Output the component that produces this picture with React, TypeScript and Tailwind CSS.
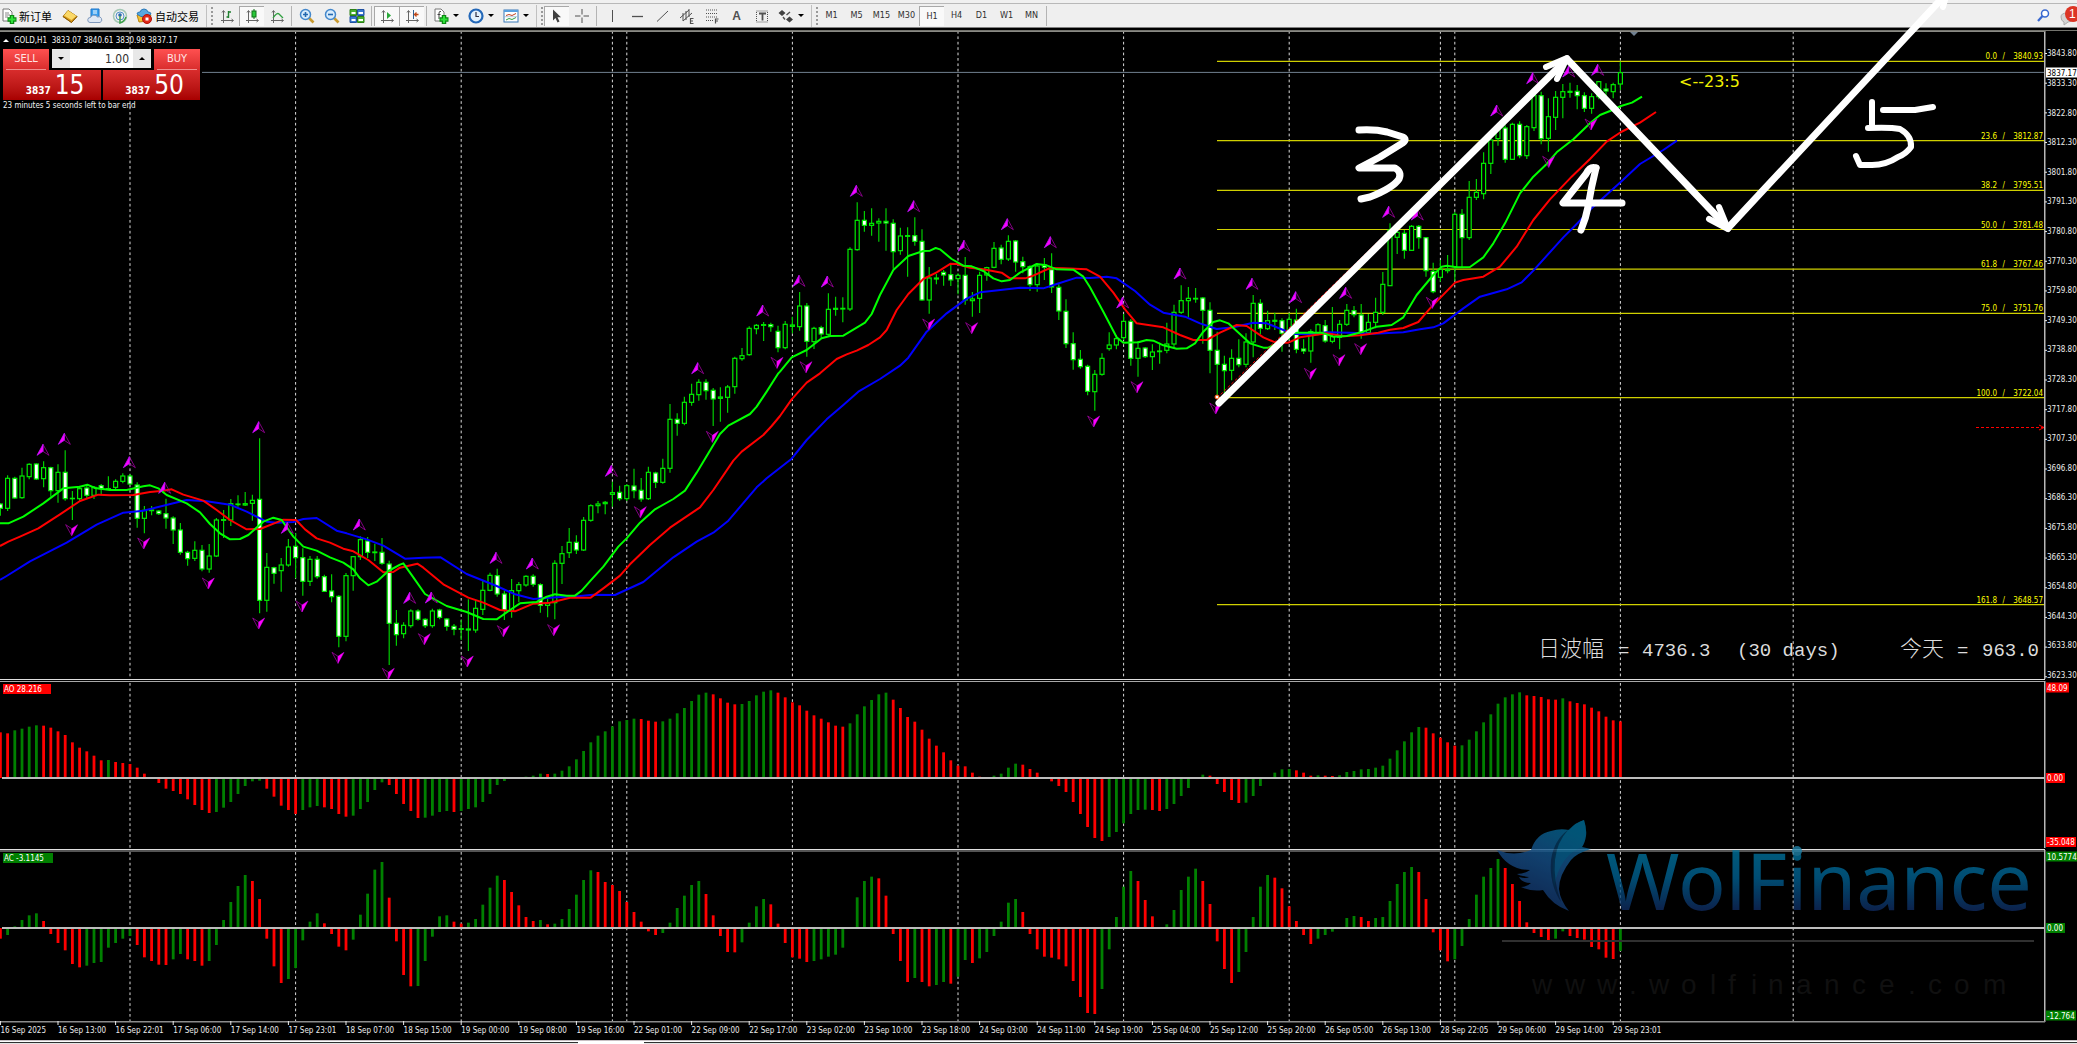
import type { ReactNode } from 'react';
import clsx from 'clsx';

type Point = [number, number];

const STEP = 7.2;
const barX = (i: number) => 0.4 + i * STEP;

const GREEN = '#00ff00';
const FONT = 'font-["DejaVu_Sans_Condensed","DejaVu_Sans",sans-serif]';

const SEPARATORS = [18, 41, 64, 85, 87, 110, 133, 156, 179, 200, 202, 225, 249];

const TIMES = [
  '16 Sep 2025', '16 Sep 13:00', '16 Sep 22:01', '17 Sep 06:00', '17 Sep 14:00', '17 Sep 23:01',
  '18 Sep 07:00', '18 Sep 15:00', '19 Sep 00:00', '19 Sep 08:00', '19 Sep 16:00', '22 Sep 01:00',
  '22 Sep 09:00', '22 Sep 17:00', '23 Sep 02:00', '23 Sep 10:00', '23 Sep 18:00', '24 Sep 03:00',
  '24 Sep 11:00', '24 Sep 19:00', '25 Sep 04:00', '25 Sep 12:00', '25 Sep 20:00', '26 Sep 05:00',
  '26 Sep 13:00', '28 Sep 22:05', '29 Sep 06:00', '29 Sep 14:00', '29 Sep 23:01',
];

const FIBS = [
  { level: '0.0', price: '3840.93', y: 61.3 },
  { level: '23.6', price: '3812.87', y: 140.7 },
  { level: '38.2', price: '3795.51', y: 190.3 },
  { level: '50.0', price: '3781.48', y: 229.5 },
  { level: '61.8', price: '3767.46', y: 269.2 },
  { level: '75.0', price: '3751.76', y: 313.4 },
  { level: '100.0', price: '3722.04', y: 397.6 },
  { level: '161.8', price: '3648.57', y: 604.6 },
];

// high, body top, body bottom, low, bearish - a third of a unit each, from the base of the segment
const CANDLES: { base: number; rows: string }[] = [
  {
    base: 400,
    rows: `310 312 325 347 1|226 235 325 333 0|230 235 294 296 1|203 228 293 296 0|190 193 230 238 0|190 192 237 240 1
|184 203 236 262 0|200 203 272 290 1|193 217 272 308 0|151 217 296 302 1|273 295 296 360 0|257 266 296 306 0
|258 264 286 297 1|258 262 286 297 0|252 257 266 284 1|229 266 267 268 0|238 244 262 268 0|220 228 244 250 0
|222 228 252 255 1|247 255 355 383 1|318 331 355 400 0|318 330 332 346 0|330 333 341 345 1|296 341 354 386 1
|349 354 390 432 1|369 390 457 464 1|452 457 476 497 1|424 451 475 483 0|435 451 507 514 1|432 468 507 518 0
|354 360 468 471 0|330 359 361 414 0|297 311 360 378 0|286 312 314 320 0|276 311 315 318 0|284 301 310 362 0
|115 298 601 640 1|459 502 601 635 0|500 503 520 551 1|474 495 512 575 0|417 441 495 500 0|400 439 473 535 1
|445 473 544 587 1|468 478 544 558 0|468 478 530 536 1|524 530 574 576 1|523 573 590 607 1|586 589 709 742 1
|519 527 709 724 0|468 470 527 572 0|409 419 470 480 0|411 423 457 474 1|431 456 458 483 0|414 457 490 494 1
|482 492 670 795 1|630 670 704 737 1|667 676 701 715 0|628 633 677 683 0|628 633 658 662 1`,
  },
  {
    base: 300,
    rows: `955 958 977 984 1|926 933 977 983 0|926 930 952 958 1|954 957 979 992 1|972 979 988 1006 1|960 986 988 1020 0
|898 987 990 1053 0|900 925 990 998 0|843 871 928 945 0|818 826 871 874 0|806 827 882 890 1|872 882 930 960 1
|837 872 932 953 0|846 854 872 907 0|826 829 855 860 0|823 829 853 860 1|850 854 916 938 1|895 909 916 952 0
|781 790 908 958 0|738 761 790 852 0|684 727 758 774 0|706 727 750 762 1|651 661 750 753 0|613 617 661 665 0
|603 612 617 640 0|603 607 611 643 0|545 578 583 620 0|557 577 596 602 1|553 557 596 603 0|506 558 572 595 1
|534 571 597 605 1|500 517 596 600 0|515 519 547 564 1|476 505 547 551 0|312 358 505 518 0|340 358 370 407 1
|290 307 370 376 0|251 283 307 317 0|238 247 284 302 0|238 247 272 299 1|264 271 297 378 1|262 291 295 365 0
|255 261 292 338 0|170 175 260 281 0|144 167 176 182 0|79 85 164 167 0|72 76 86 103 0|66 74 76 123 0
|68 74 80 95 1|77 94 143 157 1|63 73 143 148 0|50 75 79 100 0`,
  },
  {
    base: 160,
    rows: `396 438 500 512 0|429 438 544 590 1|500 505 545 567 0|497 503 522 537 1|400 448 523 527 0|410 445 448 467 0
|412 445 447 487 0|262 268 447 453 0|127 181 269 272 0|153 181 196 215 1|145 190 196 227 0|175 184 189 245 0
|145 184 189 272 1|178 190 275 326 1|203 228 272 284 0|202 227 229 350 0|172 227 244 257 1|208 244 420 422 1
|321 354 420 461 0|342 354 357 373 0|330 337 345 377 1|312 344 360 378 1|340 346 356 403 0|291 346 420 434 1
|396 417 422 470 0|335 346 415 459 0|320 323 345 362 0|246 265 322 325 0|254 264 298 313 1|226 244 297 303 0
|240 243 306 335 1|290 305 320 340 1|316 320 374 393 1|310 318 374 395 0|294 316 322 360 1|280 329 381 399 1
|373 382 453 480 1|418 454 551 564 1|517 551 599 629 1|570 598 620 626 1|614 619 694 706 1|630 643 695 752 0
|580 595 643 647 0|517 555 566 572 0|526 536 555 568 0|462 484 533 540 0|477 484 595 617 1|543 565 595 650 0
|561 564 590 594 1|553 576 590 630 0|548 573 575 611 0|488 552 571 580 0|434 457 552 564 0|376 422 457 462 0
|381 415 422 471 0|384 415 417 428 0|411 414 451 551 1|427 451 571 640 1`,
  },
  {
    base: 0,
    rows: `995 1051 1093 1190 1|1067 1093 1112 1180 1|1048 1075 1111 1141 0|1018 1075 1094 1102 1|1000 1026 1093 1102 0
|885 910 1026 1072 0|898 910 985 1002 1|932 962 986 990 0|938 961 964 990 0|955 962 1000 1055 1|940 958 1000 1020 0
|926 960 1048 1060 1|1018 1047 1053 1062 1|988 995 1053 1088 0|970 974 998 1006 0|960 977 1023 1028 1|921 1010 1024 1030 0
|960 973 1012 1048 0|912 931 973 978 0|918 932 944 952 1|912 945 998 1016 1|942 967 998 1003 0|893 937 967 985 0
|816 853 937 945 0|670 690 857 858 0|688 697 712 762 0|690 700 751 776 1|675 679 751 753 0|675 679 713 746 1
|711 713 812 830 1|788 814 875 880 1|780 808 832 845 0|765 808 812 820 0|636 643 800 842 0|627 643 713 805 1
|543 592 713 720 0|537 577 592 600 0|457 490 581 598 0|410 420 490 522 0|370 384 416 437 0|376 384 478 488 1
|368 373 478 480 0|364 373 467 475 1|375 380 467 477 0|270 287 383 393 0|275 287 416 433 1|295 350 415 455 0
|273 292 352 390 0|252 275 292 355 0|248 274 277 293 0|255 274 287 328 1|277 287 325 336 1|280 290 325 341 0
|243 245 290 298 0|250 267 273 310 1|248 254 275 295 0|185 218 252 270 0`,
  },
];

const candles = CANDLES.flatMap(({ base, rows }) =>
  rows.split('|').map(row => {
    const [high, top, bottom, low, bear] = row.trim().split(' ').map(Number);
    return { high: base + high / 3, top: base + top / 3, bottom: base + bottom / 3, low: base + low / 3, bear: bear === 1 };
  }),
);

const trace = (ox: number, oy: number, pts: string): Point[] =>
  pts.split(' ').map(p => {
    const [x, y] = p.split(',').map(Number);
    return [ox + x / 3, oy + y / 3];
  });

const LIPS = [
  ...trace(0, 400, '0,370 25,370 70,350 130,310 190,265 240,260 262,254 285,264 330,270 380,270 430,259 450,256 475,265 500,285 560,310 600,337 630,372 660,400 690,418 720,417 745,405 790,365 820,353 845,360 880,410 910,440 950,452 990,472 1030,488 1060,508 1080,535 1105,556 1130,545 1165,513 1200,494'),
  ...trace(400, 300, '10,790 40,832 75,882 140,918 200,936 250,957 290,958 330,930 360,910 410,906 440,890 465,883 500,887 525,887 545,872 575,838 610,800 655,740 680,715 720,668 765,628 820,597 855,572 890,518 935,443 960,402 985,377 1050,342 1070,320 1100,275 1135,220'),
  ...trace(780, 160, '0,635 35,592 80,570 125,535 150,528 190,527 255,488 275,462 300,405 340,330 385,288 430,273 450,272 467,264 480,268 515,297 550,317 575,319 610,333 640,355 665,364 690,360 720,338 770,312 800,316 830,328 880,329 910,350 930,382 970,455 1010,532 1030,548 1075,547 1100,540 1120,542 1150,556 1190,566 1220,565 1245,550'),
  ...trace(1200, 0, '10,995 40,966 60,961 85,970 110,993 150,1030 190,1043 205,1043 240,1025 285,998 365,998 400,1010 440,1008 490,995 530,980 575,975 610,952 650,885 700,825 725,800 740,797 770,802 810,801 850,772 880,730 915,670 960,580 1000,530 1040,492 1070,457 1120,418 1170,370 1200,345 1230,333 1263,318 1296,308 1326,290'),
];

const TEETH = [
  ...trace(0, 400, '0,438 25,425 60,410 115,385 180,343 240,303 295,284 330,286 400,285 450,276 490,272 515,268 550,284 610,302 650,330 690,360 740,388 780,387 830,367 850,359 888,360 915,388 950,415 990,428 1030,446 1060,454 1105,480 1150,517 1180,516'),
  ...trace(400, 300, '0,803 52,791 70,803 130,853 205,893 250,908 300,930 345,934 400,911 450,908 510,893 572,893 610,865 660,827 690,793 750,735 810,683 900,622 940,570 1000,482 1025,455 1090,405 1115,378'),
  ...trace(780, 160, '0,768 35,718 80,668 120,640 170,597 200,583 230,572 265,555 300,532 320,510 350,450 385,402 430,357 470,337 512,311 530,312 570,323 610,328 665,338 690,355 735,355 760,347 810,324 850,325 920,328 960,350 1000,398 1035,448 1070,490 1150,502 1200,525 1240,540'),
  ...trace(1200, 0, '0,1020 20,1020 60,998 110,975 140,978 190,1012 225,1027 265,1028 300,1012 380,1000 430,1009 480,1006 535,998 570,989 610,984 655,966 690,925 765,848 790,840 850,830 900,800 950,740 1000,660 1050,598 1115,530 1170,477 1220,425 1263,396 1320,368 1368,336'),
];

const JAW = [
  ...trace(0, 400, '0,540 20,528 90,484 200,428 290,374 370,338 430,332 520,310 560,300 620,304 690,314 740,335 800,365 830,368 880,366 910,357 950,354 1010,392 1040,400 1100,418 1150,437'),
  ...trace(400, 300, '15,776 70,773 122,772 200,822 290,858 345,883 400,897 470,892 540,888 580,884 645,885 730,846 820,772 890,725 940,698 985,662 1070,562 1100,535 1175,476'),
  ...trace(780, 160, '80,840 140,778 190,735 235,695 300,657 360,617 385,593 440,515 500,460 560,416 600,397 635,393 720,383 790,385 830,372 890,353 930,354 980,350 1010,355 1065,393 1110,434 1150,458 1215,470'),
  ...trace(1200, 0, '0,970 50,987 100,982 160,968 200,970 280,1002 340,1002 380,997 450,998 520,1001 610,997 660,988 700,982 730,970 790,925 840,890 920,868 965,847 1000,812 1090,712 1130,672 1180,620 1263,545 1320,492 1390,450 1431,422'),
];

const TOPS = [
  ...trace(0, 400, '129,133 193,100 388,170 494,247 776,65 862,367 1078,357 1229,577'),
  ...trace(400, 300, '94,876 288,757 397,774 634,496 893,188 1088,15'),
  ...trace(780, 160, '57,346 142,348 229,76 401,122 552,241 682,176 811,230 1028,411 1200,324'),
  ...trace(1200, 0, '156,835 287,875 437,862 566,619 652,627 890,315 998,218 1106,198 1193,193'),
];

const BOTTOMS = [
  ...trace(0, 400, '215,407 431,447 625,567 776,687 906,636 1014,790 1165,838'),
  ...trace(400, 300, '73,1034 202,1101 310,1010 461,1007 721,653 937,427 1131,205 1218,218'),
  ...trace(780, 160, '446,510 575,521 941,801 1071,698 1307,762'),
  ...trace(1200, 0, '331,1138 417,1097 482,1064 697,925 1046,502 1173,390'),
];

const AO = [
  137, 134, 143, 148, 154, 158, 157, 151, 140, 129, 107, 91, 80, 67, 53, 54, 48, 45, 42, 31, 13, 0, -15, -32, -39,
  -48, -64, -81, -96, -105, -102, -89, -72, -48, -24, -10, -8, -32, -56, -83, -96, -108, -96, -88, -84, -88, -93,
  -108, -116, -113, -93, -72, -36, -13, -21, -48, -78, -99, -120, -119, -113, -102, -99, -102, -99, -93, -88, -72,
  -48, -21, -9, 0, 3, 4, 7, 13, 12, 13, 22, 35, 56, 81, 107, 127, 140, 155, 170, 174, 178, 177, 172, 169, 170, 178,
  194, 210, 231, 250, 256, 251, 239, 226, 221, 222, 231, 248, 259, 263, 256, 242, 227, 218, 202, 188, 178, 167, 157,
  154, 164, 191, 215, 234, 251, 256, 235, 210, 183, 169, 145, 118, 97, 77, 53, 37, 35, 16, 4, 0, 7, 13, 31, 43, 40,
  27, 16, 0, -10, -24, -42, -72, -108, -147, -180, -189, -177, -162, -136, -108, -96, -95, -96, -99, -93, -78, -54,
  -30, 0, 10, 7, -18, -42, -66, -75, -74, -54, -24, 0, 16, 26, 27, 23, 16, 7, 8, 7, 6, 8, 18, 21, 26, 27, 31, 37,
  58, 83, 110, 137, 153, 151, 134, 121, 107, 97, 98, 115, 140, 167, 191, 223, 242, 251, 257, 248, 246, 243, 236,
  235, 239, 230, 225, 221, 211, 200, 184, 173, 170,
];

const AC = [
  -32, -21, 5, 24, 38, 44, 21, -18, -45, -67, -108, -118, -113, -105, -102, -59, -45, -32, -24, -51, -88, -99, -110,
  -111, -94, -78, -94, -99, -113, -99, -51, 24, 78, 126, 159, 141, 87, -32, -115, -165, -153, -120, -37, 19, 44, 14,
  -18, -56, -67, -35, 40, 103, 175, 198, 91, -40, -141, -175, -174, -99, -26, 35, 38, 19, 13, 16, 27, 70, 121, 157,
  144, 108, 68, 33, 21, 24, 11, 13, 27, 57, 100, 144, 173, 168, 138, 129, 111, 78, 48, 19, -10, -21, -15, 16, 60, 97,
  129, 141, 102, 38, -24, -72, -73, -43, 16, 65, 87, 71, 13, -45, -88, -92, -102, -99, -94, -86, -80, -59, 0, 92,
  141, 154, 149, 97, -18, -99, -162, -150, -162, -175, -171, -162, -167, -146, -96, -105, -91, -72, -24, 19, 76, 87,
  48, -18, -64, -86, -89, -94, -115, -159, -207, -255, -258, -183, -64, 33, 124, 171, 141, 84, 35, 2, 11, 54, 114,
  154, 178, 141, 72, -40, -123, -165, -132, -72, 33, 124, 159, 151, 119, 65, 21, -21, -48, -32, -21, -11, 0, 30, 36,
  33, 21, 30, 33, 81, 132, 168, 183, 168, 87, -13, -67, -100, -94, -54, 27, 100, 154, 180, 207, 180, 132, 81, 17,
  -15, -27, -40, -32, -10, -24, -30, -35, -57, -64, -89, -93, -69,
];

function Separators({ from, to }: { from: number; to: number }) {
  return (
    <g stroke="#dcdcdc" strokeWidth={1} strokeDasharray="2.7 2.7">
      {SEPARATORS.map(i => <line key={i} x1={barX(i)} x2={barX(i)} y1={from} y2={to} />)}
    </g>
  );
}

function Tag({ x, y, width, fill, text, color = '#fff' }: { x: number; y: number; width: number; fill: string; text: string; color?: string }) {
  return (
    <g>
      <rect x={x} y={y - 5} width={width} height={10} fill={fill} />
      <text x={x + 1} y={y + 3} fill={color} className="text-[8px]">{text}</text>
    </g>
  );
}

function Histogram({ values, zero }: { values: number[]; zero: number }) {
  return (
    <g>
      {values.map((v, i) => {
        const h = Math.abs(v) / 3;
        const up = i === 0 ? false : v > values[i - 1];
        return <rect key={i} x={barX(i) - 1.4} y={v > 0 ? zero - h : zero} width={2.8} height={h} fill={up ? '#008000' : '#ff0000'} />;
      })}
      <rect x={2} y={zero - 1} width={2043} height={2} fill="#bdbdbd" />
    </g>
  );
}

function Fractal({ at: [x, y], down }: { at: Point; down?: boolean }) {
  const s = down ? -1 : 1;
  return (
    <g>
      <path d={`M${x} ${y}L${x + 6 * s} ${y + 11 * s}L${x} ${y + 7 * s}Z`} fill="none" stroke="#a000a0" strokeWidth={0.8} />
      <path d={`M${x} ${y}L${x - 6 * s} ${y + 11 * s}L${x} ${y + 7 * s}Z`} fill={down ? 'none' : '#ff00ff'} stroke={down ? '#8000a0' : '#c010ff'} strokeWidth={0.8} />
      {down && <path d={`M${x} ${y}L${x + 6} ${y - 11}L${x} ${y - 7}Z`} fill="#ff00ff" />}
    </g>
  );
}

function PriceChart() {
  return (
    <svg viewBox="0 31 2077 648" className={clsx('block w-full h-auto', FONT)} role="img" aria-label="GOLD H1">
      <Separators from={31} to={679} />
      <line x1={202} x2={2045} y1={72.4} y2={72.4} stroke="#708090" />
      <g stroke="#d0d000" strokeWidth={1.2}>
        {FIBS.map(f => <line key={f.level} x1={1217} x2={2045} y1={f.y} y2={f.y} />)}
      </g>
      <g strokeWidth={1.2}>
        {candles.map((c, i) => (
          <g key={i} stroke="#00ec00">
            <line x1={barX(i)} x2={barX(i)} y1={c.high} y2={c.low} stroke="#00cc00" />
            <rect
              x={barX(i) - 2}
              y={c.top}
              width={4}
              height={Math.max(c.bottom - c.top, 0.4)}
              fill={c.bear ? '#fff' : '#000'}
            />
          </g>
        ))}
      </g>
      <g fill="none" strokeWidth={2} strokeLinejoin="round">
        <polyline points={JAW.join(' ')} stroke="#0000ff" />
        <polyline points={TEETH.join(' ')} stroke="#ff0000" />
        <polyline points={LIPS.join(' ')} stroke={GREEN} />
      </g>
      {TOPS.map(p => <Fractal key={p.join()} at={p} />)}
      {BOTTOMS.map(p => <Fractal key={p.join()} at={p} down />)}
      <line x1={1217} y1={398} x2={1390} y2={230} stroke="#ff0000" strokeDasharray="3 2" />
      <circle cx={1217} cy={397} r={2} fill="#fff" stroke="#ff4500" />

      <g className="text-[8px]" fill="#ffff00" textAnchor="end">
        {FIBS.map(f => (
          <g key={f.level}>
            <text x={1997} y={f.y - 2}>{f.level}</text>
            <text x={2005} y={f.y - 2}>/</text>
            <text x={2043} y={f.y - 2}>{f.price}</text>
          </g>
        ))}
      </g>
      <text x={1679} y={87} fill="#f0f000" className='font-["DejaVu_Sans",sans-serif] text-[16px]'>{'<--23:5'}</text>
      <path d="M1630 32h8l-4 4z" fill="#708090" />
      <line x1={1976} x2={2044} y1={427.5} y2={427.5} stroke="#ff0000" strokeDasharray="3 2" />
      <path d="M2039 425l5 2.500l-5 2.500" fill="none" stroke="#ff0000" />

      <g fill="#dcdcdc" className='font-["Liberation_Mono","Noto_Sans_CJK_SC",monospace] text-[19px]'>
        <text x={1538} y={656} className='font-["Noto_Sans_CJK_SC",sans-serif] text-[22px] font-light'>日波幅</text>
        <text x={1618} y={656}>=</text>
        <text x={1642} y={656}>4736.3</text>
        <text x={1737} y={656}>(30 days)</text>
        <text x={1900} y={656} className='font-["Noto_Sans_CJK_SC",sans-serif] text-[22px] font-light'>今天</text>
        <text x={1957} y={656}>=</text>
        <text x={1982} y={656}>963.0</text>
      </g>

      <rect x={2044} y={31} width={1.500} height={648} fill="#b8b8b8" />
      <rect x={0} y={31} width={2045} height={1} fill="#8a8a84" />
      <g fill="#ececec" className="text-[8px]">
        {Array.from({ length: 22 }, (_, i) => (
          <g key={i}>
            <rect x={2045} y={53 + i * 29.68} width={2} height={1} />
            <text x={2047} y={56.3 + i * 29.6}>{(3843.8 - i * 10.5).toFixed(2)}</text>
          </g>
        ))}
      </g>
      <Tag x={2046} y={72.5} width={31} fill="#fff" color="#000" text="3837.17" />
    </svg>
  );
}

function AwesomePanel() {
  return (
    <svg viewBox="0 679 2077 170" className={clsx('block w-full h-auto', FONT)} role="img" aria-label="AO">
      <Separators from={683} to={848} />
      <rect x={0} y={679} width={2045} height={1} fill="#e0e0e0" />
      <rect x={0} y={681} width={2045} height={1} fill="#a8a8a8" />
      <Histogram values={AO} zero={778} />
      <rect x={2044} y={681} width={1.500} height={167} fill="#b8b8b8" />
      <Tag x={3} y={689} width={48} fill="#ff0000" text="AO 28.216" />
      <Tag x={2046} y={687.500} width={23} fill="#ff0000" text="48.09" />
      <Tag x={2046} y={778} width={19} fill="#ff0000" text="0.00" />
      <Tag x={2046} y={842} width={30} fill="#ff0000" text="-35.048" />
    </svg>
  );
}

function AcceleratorPanel() {
  return (
    <svg viewBox="0 849 2077 191" className={clsx('block w-full h-auto', FONT)} role="img" aria-label="AC">
      <Separators from={852} to={1021} />
      <rect x={0} y={849} width={2045} height={1} fill="#e0e0e0" />
      <rect x={0} y={850.500} width={2045} height={1} fill="#a8a8a8" />
      <Histogram values={AC} zero={928} />
      <rect x={2044} y={850} width={1.500} height={172} fill="#b8b8b8" />
      <rect x={0} y={1021} width={2045} height={1.500} fill="#8c8c8c" />
      <Tag x={3} y={858} width={50} fill="#008000" text="AC -3.1145" />
      <Tag x={2046} y={856.500} width={31} fill="#008000" text="10.5774" />
      <Tag x={2046} y={928} width={19} fill="#008000" text="0.00" />
      <Tag x={2046} y={1015.500} width={30} fill="#008000" text="-12.764" />
      <g fill="#ececec" className="text-[8px]">
        {TIMES.map((t, i) => (
          <g key={t}>
            <rect x={barX(i * 8) - 0.5} y={1021} width={1} height={4} />
            <text x={barX(i * 8)} y={1033}>{t}</text>
          </g>
        ))}
      </g>
    </svg>
  );
}

// broker logo that floats over the lower panels
const DOMAIN: [string, number][] = [
  ['w', 1532], ['w', 1565], ['w', 1597], ['.', 1629], ['w', 1649], ['o', 1681], ['l', 1710], ['f', 1728], ['i', 1751],
  ['n', 1768], ['a', 1796], ['n', 1824], ['c', 1852], ['e', 1879], ['.', 1908], ['c', 1928], ['o', 1954], ['m', 1983],
];

function Watermark() {
  return (
    <g>
      <defs>
        <linearGradient id="brand" gradientUnits="userSpaceOnUse" x1="0" y1="850" x2="0" y2="912">
          <stop offset="0" stopColor="#00739c" />
          <stop offset="0.45" stopColor="#006090" />
          <stop offset="1" stopColor="#10285c" />
        </linearGradient>
        <linearGradient id="wolf" gradientUnits="userSpaceOnUse" x1="1580" y1="822" x2="1540" y2="912">
          <stop offset="0" stopColor="#006c94" />
          <stop offset="0.5" stopColor="#164f88" />
          <stop offset="1" stopColor="#123064" />
        </linearGradient>
      </defs>
      <g opacity={0.8}>
        <path
          d="M1497 850Q1514 857 1531 850Q1536 834 1551 831Q1560 828 1569 830Q1576 822 1584 820Q1587 829 1586 836Q1585 843 1582 847L1591 849Q1577 853 1571 860Q1559 875 1559 889Q1560 900 1569 911Q1552 905 1543 890Q1532 892 1521 887Q1527 887 1531 883Q1522 883 1519 877Q1526 879 1529 877Q1520 876 1517 874Q1524 874 1530 870Q1508 870 1497 850Z"
          fill="url(#wolf)"
        />
        <path d="M1568 830Q1577 822 1584 820Q1588 834 1582 847Q1560 855 1554 887Q1548 850 1568 830Z" fill="#006e98" opacity={0.5} />
        <path d="M1568 830Q1557 842 1555 860Q1553 880 1561 902Q1549 884 1551 860Q1554 840 1568 830Z" fill="#001830" opacity={0.5} />
        <text x={1606} y={910} fill="url(#brand)" className='font-["Noto_Sans",sans-serif] text-[79px]'>WolFinance</text>
        <circle cx={1797} cy={851} r={5} fill="#2082a8" />
      </g>
      <rect x={1502} y={940} width={532} height={2} fill="#303030" />
      <text y={994} fill="#101010" className='font-["Liberation_Sans",sans-serif] text-[28px]'>
        {DOMAIN.map(([c, x]) => <tspan key={x} x={x}>{c}</tspan>)}
      </text>
    </g>
  );
}

function Overlay() {
  return (
    <svg viewBox="0 0 2077 1044" className="absolute inset-x-0 top-0 w-full h-auto pointer-events-none" aria-hidden="true">
      <Watermark />
      {/* hand drawn wave count */}
      <g fill="none" stroke="#fff" strokeLinecap="round" strokeLinejoin="round">
        <g strokeWidth={7}>
          <path d="M1219 403L1567 59L1728 228L1947 -7" />
          <path d="M1546 67L1567 58L1557 79" strokeWidth={6} />
          <path d="M1709 219L1728 229L1719 207" strokeWidth={6} />
          <path d="M1947 -7L1943 7" strokeWidth={6} />
        </g>
        <g strokeWidth={7}>
          <path d="M1359 130Q1375 129 1387 132L1403 137Q1408 140 1401 144L1380 157L1359 168H1395Q1402 172 1399 179Q1393 188 1370 197L1361 199" />
          <path d="M1596 168Q1590 166 1586 174L1563 203H1616L1622 203" />
          <path d="M1596 168Q1591 188 1588 207Q1586 218 1581 230" />
          <path d="M1872 102V128H1868Q1890 127 1900 129Q1912 136 1911 147Q1906 154 1898 157Q1886 165 1872 165H1860L1856 156" strokeWidth={6} />
          <path d="M1883 110H1915L1933 107" strokeWidth={6} />
        </g>
      </g>
    </svg>
  );
}

function ToolButton({ label, pressed, wide, caret, children }: { label: string; pressed?: boolean; wide?: boolean; caret?: boolean; children: ReactNode }) {
  return (
    <button
      type="button"
      aria-label={label}
      className={clsx('flex h-5 shrink-0 items-center', wide ? 'w-[35px] gap-1 pl-1' : 'w-[25px] justify-center', pressed && 'bg-[#f9f9f9] border-t border-l border-[#a8a8a8]')}
    >
      {children}
      {caret && <span className="h-0 w-0 border-x-[3px] border-t-[3px] border-x-transparent border-t-black" />}
    </button>
  );
}

function Glyph({ children }: { children: ReactNode }) {
  return <svg viewBox="0 0 16 16" width={16} height={16} fill="none" stroke="#505050" className="shrink-0">{children}</svg>;
}

const Divider = () => <span className="flex w-[5px] shrink-0 justify-center"><span className="h-5 w-px bg-[#b4b4b4]" /></span>;

const Grip = () => (
  <span className="flex h-[22px] w-[10px] shrink-0 items-center gap-1 pl-[2px]">
    <span className="h-full w-px bg-[#c0c0c0]" />
    <span className="h-[18px] border-l-2 border-dotted border-[#9a9a9a]" />
  </span>
);

const Axes = () => <path d="M4.500 3v12M2 12.500H14M3 4.500l1.500-2l1.500 2M12.500 11l2 1.500l-2 1.500" stroke="#666" />;

const Plus = () => <path d="M11 7v9M6.500 11.500h9" stroke="#0b8a12" strokeWidth={4.500} />;

const PlusFill = () => <path d="M11 8v7M7.500 11.500h7" stroke="#2ee03a" strokeWidth={2} />;

function Toolbar() {
  return (
    <header className="flex h-[23px] items-center bg-[#efefef] text-black">
      <button type="button" className="flex w-[57px] shrink-0 items-center gap-[2px] pl-px">
        <Glyph>
          <path d="M2 1h6l3 3v9H2z" fill="#fff" stroke="#777" />
          <path d="M4 5h4M4 7h5M4 9h3" stroke="#888" />
          <Plus /><PlusFill />
        </Glyph>
        <span className='whitespace-nowrap font-["Noto_Sans_CJK_SC",sans-serif] text-[11px] leading-4'>新订单</span>
      </button>
      <ToolButton label="Market">
        <Glyph>
          <path d="M1 8.500L6 2.500l9 6l-5.500 6z" fill="#d99a18" stroke="#a06c08" />
          <path d="M2 7.500l4-5l8.500 5.500l-5 4z" fill="#fbd968" stroke="none" />
          <path d="M1 8.500l8.500 6l5.500-6" stroke="#8a5a05" />
        </Glyph>
      </ToolButton>
      <ToolButton label="Cloud">
        <Glyph>
          <path d="M4 1h8v9H4z" fill="#3aa0f0" stroke="#1c74c8" />
          <path d="M6 3h4M6 5h4" stroke="#fff" />
          <path d="M3 14.500a2.500 2.500 0 0 1 .500-5a4 4 0 0 1 7-.500a3 3 0 0 1 2.500 5.500z" fill="#dfe8f4" stroke="#7f98bc" />
        </Glyph>
      </ToolButton>
      <ToolButton label="Signals">
        <Glyph>
          <circle cx={8} cy={8} r={6.500} stroke="#a4c8b4" strokeWidth={1.500} />
          <circle cx={8} cy={8} r={4} stroke="#5090c8" />
          <circle cx={8} cy={7} r={1.800} fill="#2c68b0" stroke="none" />
          <path d="M8 8v7c3-1 5-3 6-6" stroke="#3ca048" strokeWidth={1.500} />
        </Glyph>
      </ToolButton>
      <button type="button" className="flex w-[72px] shrink-0 items-center gap-[3px] pl-1">
        <Glyph>
          <path d="M1 7l2 7l9-1l3-6z" fill="#f4c030" stroke="#b88410" />
          <path d="M1 6q0-2 3-2q1-3 4-3t4 3q3 0 3 2q-3 3-7 3t-7-3z" fill="#58a8e0" stroke="#2a78b8" />
          <circle cx={11} cy={11} r={4.500} fill="#e02818" stroke="#b01008" />
          <rect x={9.500} y={9.500} width={3} height={3} fill="#fff" stroke="none" />
        </Glyph>
        <span className='whitespace-nowrap font-["Noto_Sans_CJK_SC",sans-serif] text-[11px] leading-4'>自动交易</span>
      </button>
      <Grip />
      <ToolButton label="Bar chart"><Glyph><Axes /><path d="M9.500 3v7M9.500 4h2.500M7.500 9h2" stroke="#208030" strokeWidth={1.400} /></Glyph></ToolButton>
      <ToolButton label="Candlesticks" pressed>
        <Glyph><Axes /><path d="M10 1v10" stroke="#107018" /><rect x={8} y={3} width={4} height={6} fill="#28c838" stroke="#107018" /></Glyph>
      </ToolButton>
      <ToolButton label="Line chart"><Glyph><Axes /><path d="M4 10q4-6 6-4t4 4" stroke="#30a040" strokeWidth={1.300} /></Glyph></ToolButton>
      <Divider />
      {['Zoom in', 'Zoom out'].map(z => (
        <ToolButton key={z} label={z}>
          <Glyph>
            <path d="M10 10l4.500 4.500" stroke="#c89a30" strokeWidth={2.600} />
            <circle cx={6.500} cy={6.500} r={5} fill="#d8ecfc" stroke="#4488cc" strokeWidth={1.500} />
            <path d={z === 'Zoom in' ? 'M4 6.500h5M6.500 4v5' : 'M4 6.500h5'} stroke="#2468b0" strokeWidth={1.600} />
          </Glyph>
        </ToolButton>
      ))}
      <ToolButton label="Tile windows">
        <Glyph>
          <path d="M1 1.500h6.500v6H1zM8.500 8.500H15v6H8.500z" fill="#48b030" stroke="#2c8018" />
          <path d="M8.500 1.500H15v6H8.500zM1 8.500h6.500v6H1z" fill="#3878d0" stroke="#2050a0" />
          <path d="M2.500 5h4M9.500 5H14M2.500 12h4M9.500 12H14" stroke="#fff" strokeWidth={2} />
        </Glyph>
      </ToolButton>
      <Divider />
      <ToolButton label="Auto scroll" pressed><Glyph><Axes /><path d="M8 4l4 3.500L8 11z" fill="#28a838" stroke="none" /></Glyph></ToolButton>
      <ToolButton label="Chart shift" pressed><Glyph><Axes /><path d="M9.500 2v9" stroke="#306090" /><path d="M14.500 6.500H11M12.500 4.500l-2 2l2 2" stroke="#c04818" strokeWidth={1.300} /></Glyph></ToolButton>
      <Divider />
      <ToolButton label="Indicators" wide caret>
        <Glyph>
          <path d="M2 1h6l3 3v9H2z" fill="#fff" stroke="#777" />
          <path d="M8 3.500q-2-.500-2 1.500v6M4.500 6.500h3" stroke="#444" />
          <Plus /><PlusFill />
        </Glyph>
      </ToolButton>
      <ToolButton label="Periods" wide caret>
        <Glyph>
          <circle cx={8} cy={8} r={6.500} fill="#e4f2fc" stroke="#2468b8" strokeWidth={2.200} />
          <path d="M8 4v4.500h3" stroke="#334" strokeWidth={1.200} />
        </Glyph>
      </ToolButton>
      <ToolButton label="Templates" wide caret>
        <Glyph>
          <rect x={1} y={2} width={14} height={12} fill="#fff" stroke="#3878b8" />
          <path d="M1 3h14" stroke="#58a0e0" strokeWidth={2} />
          <path d="M3 7.500l3-1l3 1l4-2" stroke="#c04020" /><path d="M3 12l3-1.500l3 1l4-2" stroke="#30a040" />
          <path d="M1 8.700h14" stroke="#9ab4d0" strokeWidth={0.700} />
        </Glyph>
      </ToolButton>
      <Grip />
      <ToolButton label="Cursor" pressed><Glyph><path d="M4 1.500v11l2.500-2.500l2 4.500l2-1l-2-4.200H12z" fill="#404040" stroke="none" /></Glyph></ToolButton>
      <ToolButton label="Crosshair"><Glyph><path d="M8 1v5.500M8 9.500V15M1 8h5.500M9.500 8H15" /></Glyph></ToolButton>
      <Divider />
      <ToolButton label="Vertical line"><Glyph><path d="M8.500 2v12" /></Glyph></ToolButton>
      <ToolButton label="Horizontal line"><Glyph><path d="M3 8.500h11" strokeWidth={1.300} /></Glyph></ToolButton>
      <ToolButton label="Trendline"><Glyph><path d="M3 13.500L14 3" /></Glyph></ToolButton>
      <ToolButton label="Equidistant channel">
        <Glyph><path d="M1 10l9-8M4 13l9-8M4 5v8M7 3v9M10 1v8" /><path d="M14.500 10.500h-3v5h3M11.500 13h2.500" strokeWidth={1.200} /></Glyph>
      </ToolButton>
      <ToolButton label="Fibonacci retracement">
        <Glyph><path d="M2 2h12M2 5.500h12M2 9h12M2 12.500h7" strokeDasharray="1 1" /><path d="M11.500 15.500v-4.500h3M11.500 13h2.500" strokeWidth={1.200} /></Glyph>
      </ToolButton>
      <ToolButton label="Text"><span className='font-["Liberation_Sans",sans-serif] text-xs font-bold text-[#505050]'>A</span></ToolButton>
      <ToolButton label="Text label"><Glyph><rect x={2.500} y={3} width={11} height={11} strokeDasharray="1 1" /><path d="M5 5.500h7M8.500 5.500v7" strokeWidth={1.800} /></Glyph></ToolButton>
      <ToolButton label="Arrows" wide caret>
        <Glyph><path d="M4 2l3.500 3L4 8L.500 5zM11.500 8.500l3.500 3l-3.500 3l-3.500-3z" fill="#404040" stroke="none" /><path d="M5 9l2 2.500M8.500 7l3.500-3" strokeWidth={1.400} /></Glyph>
      </ToolButton>
      <Grip />
      {['M1', 'M5', 'M15', 'M30', 'H1', 'H4', 'D1', 'W1', 'MN'].map(tf => (
        <ToolButton key={tf} label={tf} pressed={tf === 'H1'}>
          <span className={clsx(FONT, 'pt-px text-[9px] text-[#303030]')}>{tf}</span>
        </ToolButton>
      ))}
      <Divider />
      <div className="ml-auto flex shrink-0 items-center gap-2 overflow-hidden">
        <button type="button" aria-label="Search">
          <Glyph><circle cx={10} cy={5.500} r={3.500} fill="#fff" stroke="#3868d0" strokeWidth={1.500} /><path d="M7.500 8L3 13" stroke="#3868d0" strokeWidth={2.200} /></Glyph>
        </button>
        <button type="button" aria-label="Notifications" className="flex h-[23px] w-[18px] overflow-hidden">
          <svg viewBox="0 0 18 23" width={18} height={23}>
            <path d="M2 13q0-4 6-4t7 4t-6 5l-4 3v-3q-3-1-3-5z" fill="#d4d4d4" stroke="#aaa" />
            <circle cx={14} cy={10} r={8} fill="#dc3424" />
            <text x={10} y={14} fill="#fff" className='font-["Liberation_Sans",sans-serif] text-xs'>1</text>
          </svg>
        </button>
      </div>
    </header>
  );
}

function Quote({ side, whole, pips }: { side: string; whole: string; pips: string }) {
  return (
    <button
      type="button"
      aria-label={`${side} ${whole}.${pips}`}
      className="flex h-[30px] flex-1 items-baseline justify-end gap-1 bg-linear-to-b from-[#d82c2c] to-[#a80000] pr-4 text-white"
    >
      <span className="text-[10px] font-bold leading-[30px]">{whole}</span>
      <span className="text-[26px] leading-[30px]">{pips}</span>
    </button>
  );
}

function DealButton({ children }: { children: ReactNode }) {
  return (
    <button type="button" className="flex h-full w-[46px] flex-col items-stretch justify-between bg-linear-to-b from-[#ff5050] to-[#d82c2c] px-[3px] text-[11px] leading-5 text-[#ffe4e4]">
      <span>{children}</span>
      <span className="h-px bg-[#f09090]" />
    </button>
  );
}

function OneClickTrading() {
  return (
    <section className={clsx('absolute left-[3px] top-px w-[197px] text-[#f4f4f4]', FONT)}>
      <h1 className="flex h-[17px] items-center gap-1 whitespace-nowrap text-[8px]">
        <span className="mr-px h-0 w-0 border-x-[3px] border-b-[3px] border-x-transparent border-b-white" />
        <span className="whitespace-pre">{'GOLD,H1  3833.07 3840.61 3830.98 3837.17'}</span>
      </h1>
      <div className="flex h-[21px] items-start justify-between bg-black">
        <DealButton>SELL</DealButton>
        <div className="flex h-[19px] w-[99px] bg-white text-black">
          <button type="button" aria-label="Decrease volume" className="flex w-[18px] items-center justify-center bg-[#e8e8e8]">
            <span className="h-0 w-0 border-x-[3px] border-t-[3px] border-x-transparent border-t-black" />
          </button>
          <input aria-label="Volume" defaultValue="1.00" className="min-w-0 flex-1 pr-1 text-right text-xs text-[#303030] outline-none" />
          <button type="button" aria-label="Increase volume" className="flex w-[18px] items-center justify-center bg-[#e8e8e8]">
            <span className="h-0 w-0 border-x-[3px] border-b-[3px] border-x-transparent border-b-black" />
          </button>
        </div>
        <DealButton>BUY</DealButton>
      </div>
      <div className="flex gap-[2px] bg-black">
        <Quote side="SELL" whole="3837" pips="15" />
        <Quote side="BUY" whole="3837" pips="50" />
      </div>
      <p className="whitespace-nowrap text-[8px] leading-3">23 minutes 5 seconds left to bar end</p>
    </section>
  );
}

export default function App() {
  return (
    <div className="relative flex flex-col overflow-hidden bg-black">
      <div className="h-1 border-b border-[#b8b8b8] bg-[#f0f0f0]" />
      <Toolbar />
      <div className="h-px bg-[#808080]" />
      <div className="h-[2px] bg-black" />
      <div className="h-px bg-[#74746e]" />
      <main className="relative">
        <PriceChart />
        <AwesomePanel />
        <AcceleratorPanel />
        <OneClickTrading />
      </main>
      <Overlay />
      <footer className="flex h-1 flex-col bg-white">
        <div className="h-px bg-[#c8c0c4]" />
        <div className="h-px bg-white" />
        <div className="flex h-[2px]">
          <div className="w-[578px] border-t border-[#303030] bg-[#e4e4e4]" />
          <div className="w-[66px] bg-white" />
          <div className="flex-1 border-t border-[#303030] bg-[#e4e4e4]" />
        </div>
      </footer>
    </div>
  );
}
